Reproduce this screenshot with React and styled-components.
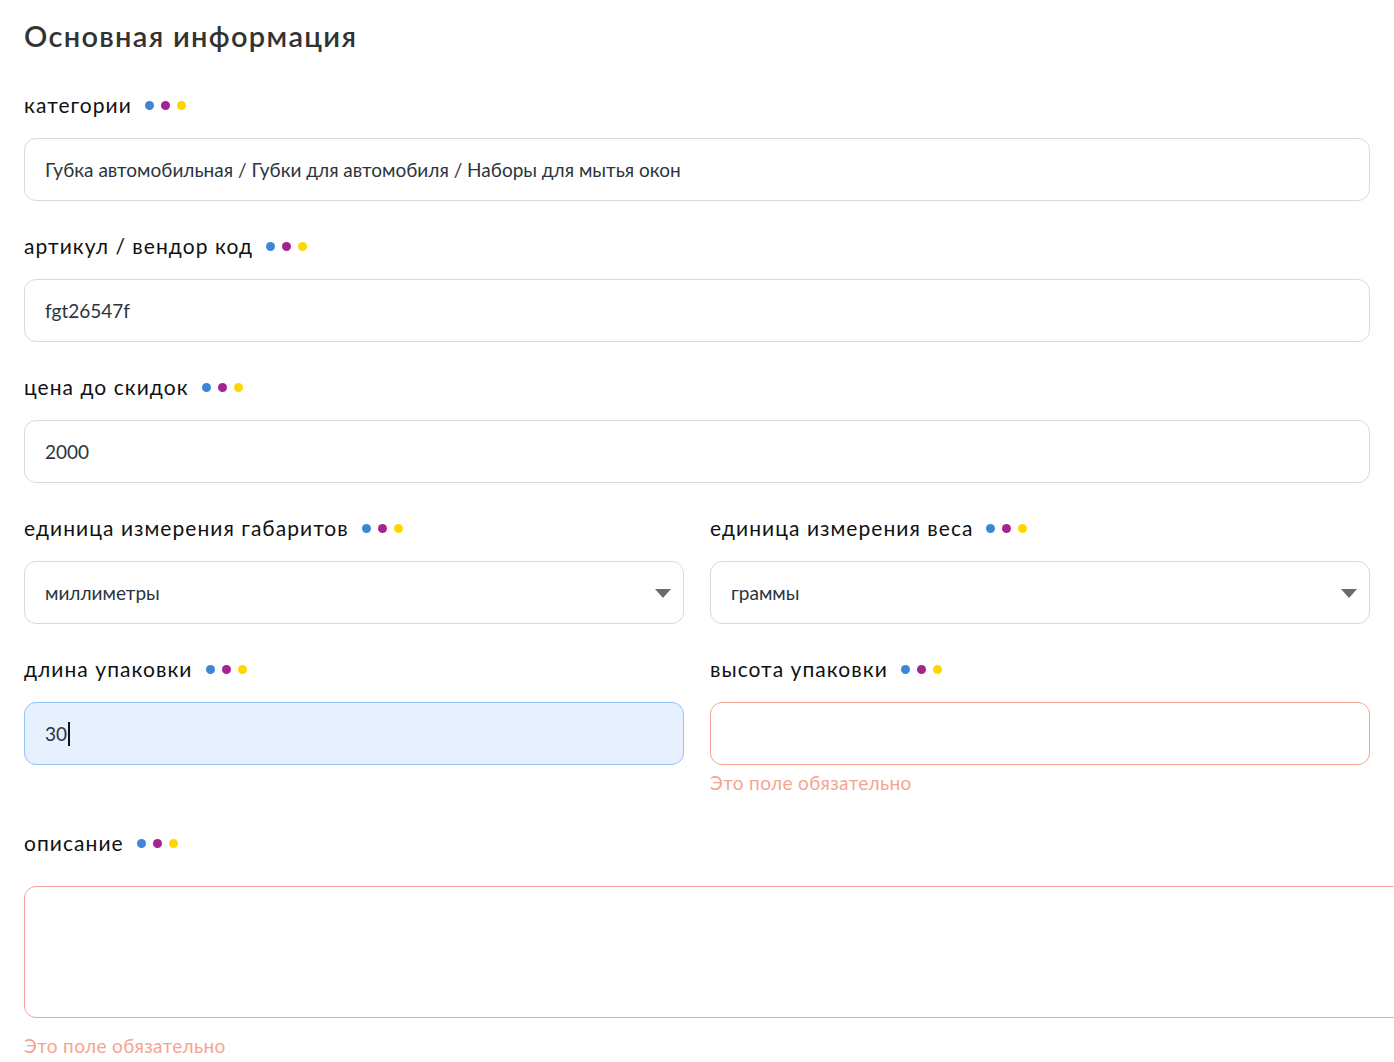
import React from "react";
import styled, { createGlobalStyle } from "styled-components";

const Global = createGlobalStyle`
  html, body { margin: 0; padding: 0; background: #fff; overflow-x: hidden; }
  body { font-family: "Lato", "Noto Sans", sans-serif; }
  * { box-sizing: border-box; }
`;

const Page = styled.div`
  padding: 17px 24px 0 24px;
  width: 1394px;
`;

const Title = styled.h1`
  margin: 0 0 38px 0;
  font-size: 29px;
  font-weight: 600;
  letter-spacing: 1.3px;
  color: #333;
  line-height: 38px;
`;

const Field = styled.div`
  display: flex;
  flex-direction: column;
  min-width: 0;
  margin-top: ${(p) => (p.$spaced ? "3px" : "0")};
`;

const LabelRow = styled.div`
  display: flex;
  align-items: center;
  height: 24px;
  margin-bottom: ${(p) => (p.$wide ? "31px" : "21px")};
`;

const Label = styled.span`
  font-size: 21px;
  letter-spacing: 1.05px;
  color: #111;
  line-height: 24px;
`;

const Dots = styled.span`
  display: inline-flex;
  gap: 7px;
  margin-left: 13px;
  margin-top: 1px;
`;

const Dot = styled.span`
  width: 9px;
  height: 9px;
  border-radius: 50%;
  background: ${(p) => p.$c};
`;

const Box = styled.div`
  height: 63px;
  border-radius: 12px;
  border: 1px solid ${(p) => (p.$state === "error" ? "#f6a392" : p.$state === "focus" ? "#90c3f7" : "#d6dbe3")};
  background: ${(p) => (p.$state === "focus" ? "#e7f0fe" : "#fff")};
  display: flex;
  align-items: center;
  padding: 0 20px;
  font-size: 19px;
  color: #2b3440;
  position: relative;
  width: ${(p) => p.$width || "auto"};
`;

const Caret = styled.span`
  display: inline-block;
  width: 2px;
  height: 24px;
  background: #111;
  margin-left: 1px;
`;

const Arrow = styled.span`
  position: absolute;
  right: 12px;
  top: 27px;
  width: 0;
  height: 0;
  border-left: 8px solid transparent;
  border-right: 8px solid transparent;
  border-top: 9px solid #6b6b6b;
`;

const Area = styled(Box)`
  height: 132px;
  align-items: flex-start;
`;

const Error = styled.div`
  font-size: 19px;
  letter-spacing: 0.35px;
  color: #f7a392;
  margin-top: ${(p) => (p.$far ? "16px" : "6px")};
  line-height: 24px;
`;

const Stack = styled.div`
  display: flex;
  flex-direction: column;
  gap: 33px;
  width: 1346px;
`;

const Grid = styled.div`
  display: grid;
  grid-template-columns: 660px 660px;
  column-gap: 26px;
`;

const ColorDots = () => (
  <Dots>
    <Dot $c="#3d86d6" />
    <Dot $c="#a3238f" />
    <Dot $c="#ffd700" />
  </Dots>
);

const Head = ({ children, wide }) => (
  <LabelRow $wide={wide}>
    <Label>{children}</Label>
    <ColorDots />
  </LabelRow>
);

export default function App() {
  return (
    <>
      <Global />
      <Page>
        <Title>Основная информация</Title>
        <Stack>
          <Field>
            <Head>категории</Head>
            <Box>Губка автомобильная / Губки для автомобиля / Наборы для мытья окон</Box>
          </Field>
          <Field>
            <Head>артикул / вендор код</Head>
            <Box>fgt26547f</Box>
          </Field>
          <Field>
            <Head>цена до скидок</Head>
            <Box>2000</Box>
          </Field>
          <Grid>
            <Field>
              <Head>единица измерения габаритов</Head>
              <Box>
                миллиметры
                <Arrow />
              </Box>
            </Field>
            <Field>
              <Head>единица измерения веса</Head>
              <Box>
                граммы
                <Arrow />
              </Box>
            </Field>
          </Grid>
          <Grid>
            <Field>
              <Head>длина упаковки</Head>
              <Box $state="focus">
                30
                <Caret />
              </Box>
            </Field>
            <Field>
              <Head>высота упаковки</Head>
              <Box $state="error" />
              <Error>Это поле обязательно</Error>
            </Field>
          </Grid>
          <Field $spaced>
            <Head wide>описание</Head>
            <Area $state="error" $width="1420px" />
            <Error $far>Это поле обязательно</Error>
          </Field>
        </Stack>
      </Page>
    </>
  );
}
